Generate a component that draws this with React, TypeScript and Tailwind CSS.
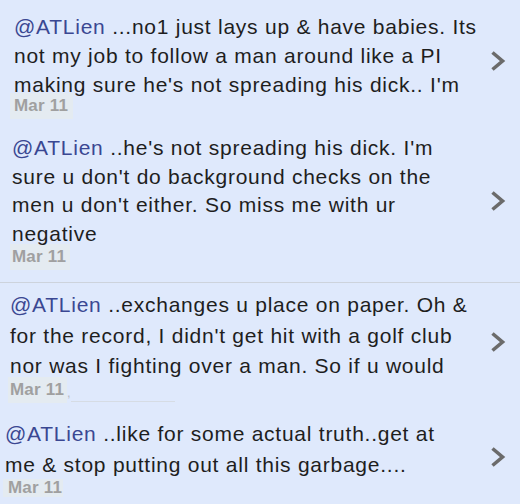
import React from "react";

const Chevron = () => (
  <svg width="16" height="22" viewBox="0 0 16 22" fill="none">
    <polyline points="2.5,2.5 12.5,11 2.5,19.5" stroke="#6b6b6b" strokeWidth="3.6" strokeLinecap="butt" strokeLinejoin="miter" />
  </svg>
);

const Handle = () => <span className="text-[#3a4792]">@ATLien</span>;

const DateTag = ({ cls }: { cls: string }) => (
  <div className={cls}>
    <span className="text-[17px] font-bold text-[#a0a0a0] tracking-[0.2px] leading-[18px]">Mar 11</span>
  </div>
);

export default function App() {
  const font = { fontFamily: '"Liberation Sans", Arial, sans-serif' };
  return (
    <div className="w-[520px] h-[504px] overflow-hidden bg-[#dfe9fc] text-[#1e1e1e]" style={font}>
      {/* Block 1 */}
      <div className="h-[122px] flex items-start">
        <div className="flex-1 pl-[14px] pt-[12px]">
          <p className="text-[21px] leading-[29px] tracking-[0.75px] whitespace-nowrap">
            <Handle /> ...no1 just lays up &amp; have babies. Its<br />
            not my job to follow a man around like a PI<br />
            making sure he's not spreading his dick.. I'm
          </p>
          <DateTag cls="mt-[-6px] ml-[-4px] w-[63px] h-[26px] bg-[#e4ebf1] flex items-center pl-[4px]" />
        </div>
        <div className="w-[40px] pt-[50px] pl-[10px]">
          <Chevron />
        </div>
      </div>
      {/* Block 2 */}
      <div className="h-[160px] flex items-start">
        <div className="flex-1 pl-[12px] pt-[12px]">
          <p className="text-[21px] leading-[28.7px] tracking-[0.75px] whitespace-nowrap">
            <Handle /> ..he's not spreading his dick. I'm<br />
            sure u don't do background checks on the<br />
            men u don't either. So miss me with ur<br />
            negative
          </p>
          <DateTag cls="mt-[-5px] ml-[-2px] w-[60px] h-[26px] bg-[#e4ebf1] flex items-center pl-[2px]" />
        </div>
        <div className="w-[40px] pt-[68px] pl-[10px]">
          <Chevron />
        </div>
      </div>
      <div className="h-px bg-[#cdd3dc]" />
      {/* Block 3 */}
      <div className="h-[121px] flex items-start">
        <div className="flex-1 pl-[10px] pt-[7px]">
          <p className="text-[21px] leading-[30.5px] tracking-[0.75px] whitespace-nowrap">
            <Handle /> ..exchanges u place on paper. Oh &amp;<br />
            for the record, I didn't get hit with a golf club<br />
            nor was I fighting over a man. So if u would
          </p>
          <div className="flex items-end">
            <DateTag cls="mt-[-5px] ml-[-2px] w-[59px] h-[26px] bg-[#e4ebf1] flex items-center pl-[2px]" />
            <span className="text-[13px] text-[#b8bcc4] leading-[16px] mb-[2px]">,</span>
            <div className="w-[104px] h-px bg-[#d6dce4] mb-[1px]" />
          </div>
        </div>
        <div className="w-[40px] pt-[48px] pl-[10px]">
          <Chevron />
        </div>
      </div>
      {/* Block 4 */}
      <div className="h-[100px] flex items-start">
        <div className="flex-1 pl-[5px] pt-[14px]">
          <p className="text-[21px] leading-[31px] tracking-[0.75px] whitespace-nowrap">
            <Handle /> ..like for some actual truth..get at<br />
            me &amp; stop putting out all this garbage....
          </p>
          <DateTag cls="mt-[-1px] ml-[-2px] w-[60px] h-[18px] bg-[#e4ebf1] flex items-center pl-[5px]" />
        </div>
        <div className="w-[40px] pt-[42px] pl-[10px]">
          <Chevron />
        </div>
      </div>
    </div>
  );
}
